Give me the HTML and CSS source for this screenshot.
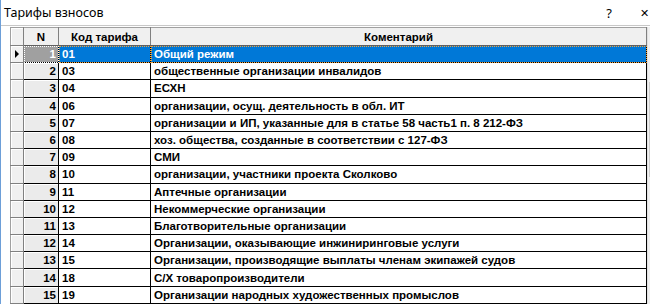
FILE: index.html
```html
<!DOCTYPE html>
<html lang="ru">
<head>
  <meta charset="UTF-8" />
  <title>Тарифы взносов</title>
  <link rel="stylesheet" href="styles.css">
</head>
<body>
  <div id="window">
    <div id="titlebar">
      <span class="caption">Тарифы взносов</span>
      <span class="tbtn help">?</span>
      <span class="tbtn close">✕</span>
    </div>

    <div id="client">
      <div id="gridWrap">
        <table id="grid">
          <colgroup>
            <col class="c-ind"><col class="c-n"><col class="c-code"><col class="c-comm">
          </colgroup>
          <thead>
            <tr>
              <th class="ind"></th>
              <th>N</th>
              <th>Код тарифа</th>
              <th>Коментарий</th>
            </tr>
          </thead>
          <tbody id="rows"></tbody>
        </table>
        <div id="vscroll"><div class="thumb"></div></div>
      </div>
    </div>
  </div>

  <script>
    const tariffs = [
      ['01', 'Общий режим'],
      ['03', 'общественные организации инвалидов'],
      ['04', 'ЕСХН'],
      ['06', 'организации, осущ. деятельность в обл. ИТ'],
      ['07', 'организации и ИП, указанные для в статье 58 часть1 п. 8 212-ФЗ'],
      ['08', 'хоз. общества, созданные в соответствии с 127-ФЗ'],
      ['09', 'СМИ'],
      ['10', 'организации, участники проекта Сколково'],
      ['11', 'Аптечные организации'],
      ['12', 'Некоммерческие организации'],
      ['13', 'Благотворительные организации'],
      ['14', 'Организации, оказывающие инжиниринговые услуги'],
      ['15', 'Организации, производящие выплаты членам экипажей судов'],
      ['18', 'С/Х товаропроизводители'],
      ['19', 'Организации народных художественных промыслов']
    ];

    const rows = document.getElementById('rows');
    tariffs.forEach((t, i) => {
      const tr = document.createElement('tr');
      if (i === 0) tr.className = 'selected';
      tr.innerHTML =
        '<td class="ind">' + (i === 0 ? '<span class="arrow"></span>' : '') + '</td>' +
        '<td class="num">' + (i + 1) + '</td>' +
        '<td class="code">' + t[0] + '</td>' +
        '<td class="comm">' + t[1] + '</td>';
      rows.appendChild(tr);
    });
  </script>
</body>
</html>
```

FILE: styles.css
```css
/* Windows dialog with a DBGrid */
html, body {
  margin: 0;
  padding: 0;
  width: 650px;
  height: 304px;
  overflow: hidden;
  background: #ffffff;
}
#window {
  width: 650px;
  height: 304px;
  display: flex;
  flex-direction: column;
  border-left: 1px solid #6d9fd8;
  box-sizing: border-box;
}
#titlebar {
  height: 25px;
  flex: none;
  display: flex;
  align-items: center;
  font-family: 'Noto Sans', 'Open Sans', sans-serif;
  font-size: 12.5px;
  color: #000;
  border-bottom: 1px solid #c8c8c8;
}
#titlebar .caption {
  padding-left: 3px;
  flex-grow: 1;
}
.tbtn {
  text-align: center;
  font-size: 13px;
}
.help { margin-right: 28px; }
.close { margin-right: 1px; font-size: 11px; }
#client {
  flex-grow: 1;
  padding: 1px 0 0 9px;
  background: #ffffff;
}
#gridWrap {
  display: flex;
  height: 100%;
}
#grid {
  border-collapse: collapse;
  table-layout: fixed;
  width: 636px;
  font-family: 'Liberation Sans', Arial, sans-serif;
  font-size: 11.5px;
  font-weight: bold;
  color: #000;
  border-left: 1px solid #a0a0a0;
  border-top: 1px solid #a0a0a0;
}
.c-ind { width: 13px; }
.c-n { width: 35px; }
.c-code { width: 92px; }
.c-comm { width: 496px; }
#grid th {
  height: 17px;
  padding: 0;
  background: #f0f0f0;
  border-right: 1px solid #808080;
  border-bottom: 1px solid #606060;
  text-align: center;
  font-size: 11.5px;
}
#grid td {
  height: 16px;
  padding: 0 3px;
  border-right: 1px solid #000;
  border-bottom: 1px solid #000;
  white-space: nowrap;
  overflow: hidden;
}
#grid .ind {
  padding: 0;
  background: #f0f0f0;
  border-right: 1px solid #808080;
  border-bottom: 1px solid #808080;
  box-shadow: inset 1px 1px 0 #ffffff;
}
#grid td.num {
  text-align: right;
  background: #ebebeb;
  padding-right: 2px;
  box-shadow: inset 1px 1px 0 #ffffff;
}
#grid td.code {
  padding-left: 3px;
}
#grid td.comm {
  padding-left: 3px;
}
.arrow {
  display: block;
  margin-left: 4px;
  width: 0;
  height: 0;
  border-top: 4px solid transparent;
  border-bottom: 4px solid transparent;
  border-left: 4px solid #000;
}
#grid tr.selected td.num {
  background: #a0a0a0;
  color: #ffffff;
  box-shadow: none;
  outline: 1px dotted #ffffff;
  outline-offset: -1px;
}
#grid tr.selected td.code,
#grid tr.selected td.comm {
  background: #0078d7;
  color: #ffffff;
  outline: 1px dotted #f2a23c;
  outline-offset: -1px;
}
#vscroll {
  flex-grow: 1;
  background: #f0f0f0;
  border-left: 1px solid #e0e0e0;
  position: relative;
}
#vscroll .thumb {
  position: absolute;
  left: 1px;
  right: 0;
  top: 55px;
  height: 95px;
  background: #cdcdcd;
}
```
